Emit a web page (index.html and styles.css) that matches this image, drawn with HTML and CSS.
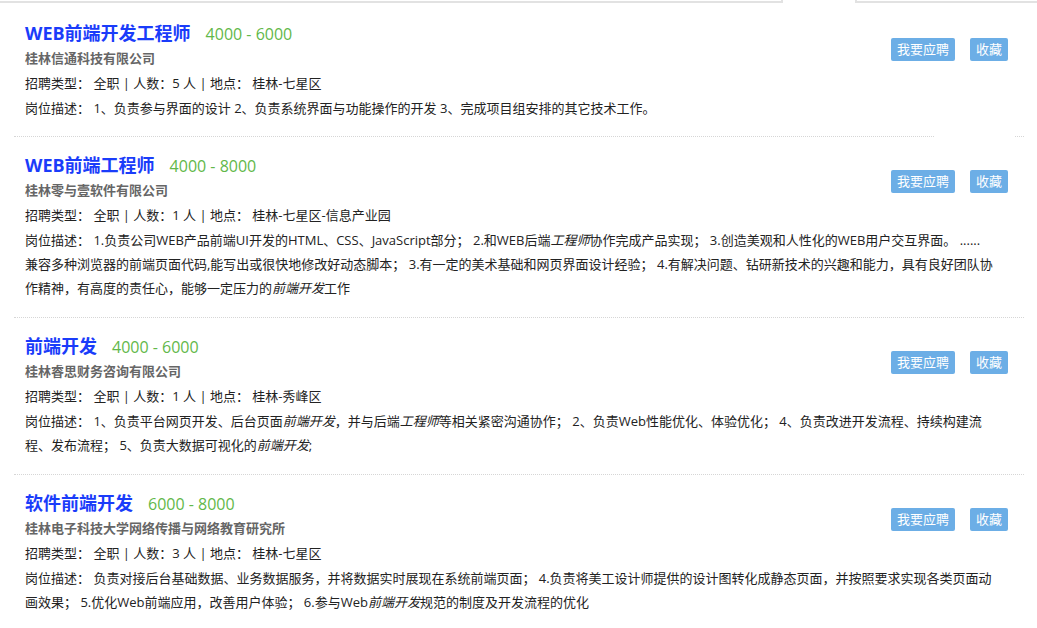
FILE: index.html
```html
<html>
  <head>
    <meta charset="utf-8">
    <meta name="viewport" content="width=device-width, initial-scale=1.0">
    <link rel="stylesheet" href="styles.css">
  </head>
  <body>
    <div class="topbar">
      <div class="tabLeft"></div>
      <div class="tabGap"></div>
      <div class="tabRight"></div>
    </div>

    <ul class="jobList">
      <li class="job first">
        <div class="jobActions">
          <button class="btn">我要应聘</button>
          <button class="btn">收藏</button>
        </div>
        <h3 class="jobTitle"><a href="#">WEB前端开发工程师</a><span class="salary">4000 - 6000</span></h3>
        <p class="company">桂林信通科技有限公司</p>
        <p class="meta">招聘类型： 全职 | 人数：5 人 | 地点： 桂林-七星区</p>
        <p class="desc">岗位描述： 1、负责参与界面的设计 2、负责系统界面与功能操作的开发 3、完成项目组安排的其它技术工作。</p>
        <div class="mask"></div>
      </li>

      <li class="job">
        <div class="jobActions">
          <button class="btn">我要应聘</button>
          <button class="btn">收藏</button>
        </div>
        <h3 class="jobTitle"><a href="#">WEB前端工程师</a><span class="salary">4000 - 8000</span></h3>
        <p class="company">桂林零与壹软件有限公司</p>
        <p class="meta">招聘类型： 全职 | 人数：1 人 | 地点： 桂林-七星区-信息产业园</p>
        <p class="desc">岗位描述： 1.负责公司WEB产品前端UI开发的HTML、CSS、JavaScript部分； 2.和WEB后端<em>工程师</em>协作完成产品实现； 3.创造美观和人性化的WEB用户交互界面。 ......<br>兼容多种浏览器的前端页面代码,能写出或很快地修改好动态脚本； 3.有一定的美术基础和网页界面设计经验； 4.有解决问题、钻研新技术的兴趣和能力，具有良好团队协<br>作精神，有高度的责任心，能够一定压力的<em>前端开发</em>工作</p>
      </li>

      <li class="job">
        <div class="jobActions">
          <button class="btn">我要应聘</button>
          <button class="btn">收藏</button>
        </div>
        <h3 class="jobTitle"><a href="#">前端开发</a><span class="salary">4000 - 6000</span></h3>
        <p class="company">桂林睿思财务咨询有限公司</p>
        <p class="meta">招聘类型： 全职 | 人数：1 人 | 地点： 桂林-秀峰区</p>
        <p class="desc">岗位描述： 1、负责平台网页开发、后台页面<em>前端开发</em>，并与后端<em>工程师</em>等相关紧密沟通协作； 2、负责Web性能优化、体验优化； 4、负责改进开发流程、持续构建流<br>程、发布流程； 5、负责大数据可视化的<em>前端开发</em>;</p>
      </li>

      <li class="job">
        <div class="jobActions">
          <button class="btn">我要应聘</button>
          <button class="btn">收藏</button>
        </div>
        <h3 class="jobTitle"><a href="#">软件前端开发</a><span class="salary">6000 - 8000</span></h3>
        <p class="company">桂林电子科技大学网络传播与网络教育研究所</p>
        <p class="meta">招聘类型： 全职 | 人数：3 人 | 地点： 桂林-七星区</p>
        <p class="desc">岗位描述： 负责对接后台基础数据、业务数据服务，并将数据实时展现在系统前端页面； 4.负责将美工设计师提供的设计图转化成静态页面，并按照要求实现各类页面动<br>画效果； 5.优化Web前端应用，改善用户体验； 6.参与Web<em>前端开发</em>规范的制度及开发流程的优化</p>
      </li>
    </ul>
  </body>
</html>
```

FILE: styles.css
```css
body {
  margin: 0;
  background-color: #fff;
  font-family: "Open Sans", "Noto Sans CJK SC", sans-serif;
  color: #333;
}
.topbar {
  display: flex;
  height: 3px;
}
.tabLeft {
  width: 781px;
  border-bottom: 2px solid #e2e2e2;
  border-right: 2px solid #e2e2e2;
}
.tabGap {
  width: 72px;
}
.tabRight {
  flex: 1;
  border-bottom: 2px solid #e2e2e2;
  border-left: 2px solid #e2e2e2;
}
.jobList {
  list-style: none;
  margin: 0 0 0 14px;
  padding: 0;
  width: 1010px;
}
.job {
  position: relative;
  padding: 16px 14px 17px 11px;
  border-bottom: 1px dotted #d6d6d6;
}
.first {
  padding-top: 18px;
  padding-bottom: 16px;
}
.mask {
  position: absolute;
  left: 920px;
  bottom: -1px;
  width: 80px;
  height: 2px;
  background-color: #fff;
}
.jobTitle {
  margin: 0;
  font-size: 18px;
  line-height: 24px;
  font-weight: bold;
}
.jobTitle a {
  color: #1a3cfa;
  text-decoration: none;
}
.salary {
  margin-left: 15px;
  font-size: 16px;
  font-weight: normal;
  color: #62b84a;
}
.company {
  margin: 0;
  font-size: 13px;
  line-height: 25px;
  font-weight: bold;
  color: #666;
}
.meta {
  margin: 0;
  font-size: 13px;
  line-height: 25px;
  color: #222;
}
.desc {
  margin: 0;
  font-size: 13px;
  line-height: 24px;
  color: #222;
}
.desc em {
  font-style: italic;
  line-height: 14px;
}
.jobActions {
  float: right;
  display: flex;
  gap: 15px;
  margin-top: 17px;
  margin-right: 2px;
}
.btn {
  font-family: "Open Sans", "Noto Sans CJK SC", sans-serif;
  font-size: 13px;
  line-height: 17px;
  padding: 3px 6px;
  border: none;
  border-radius: 2px;
  background-color: #6caee6;
  color: #fff;
}
```
